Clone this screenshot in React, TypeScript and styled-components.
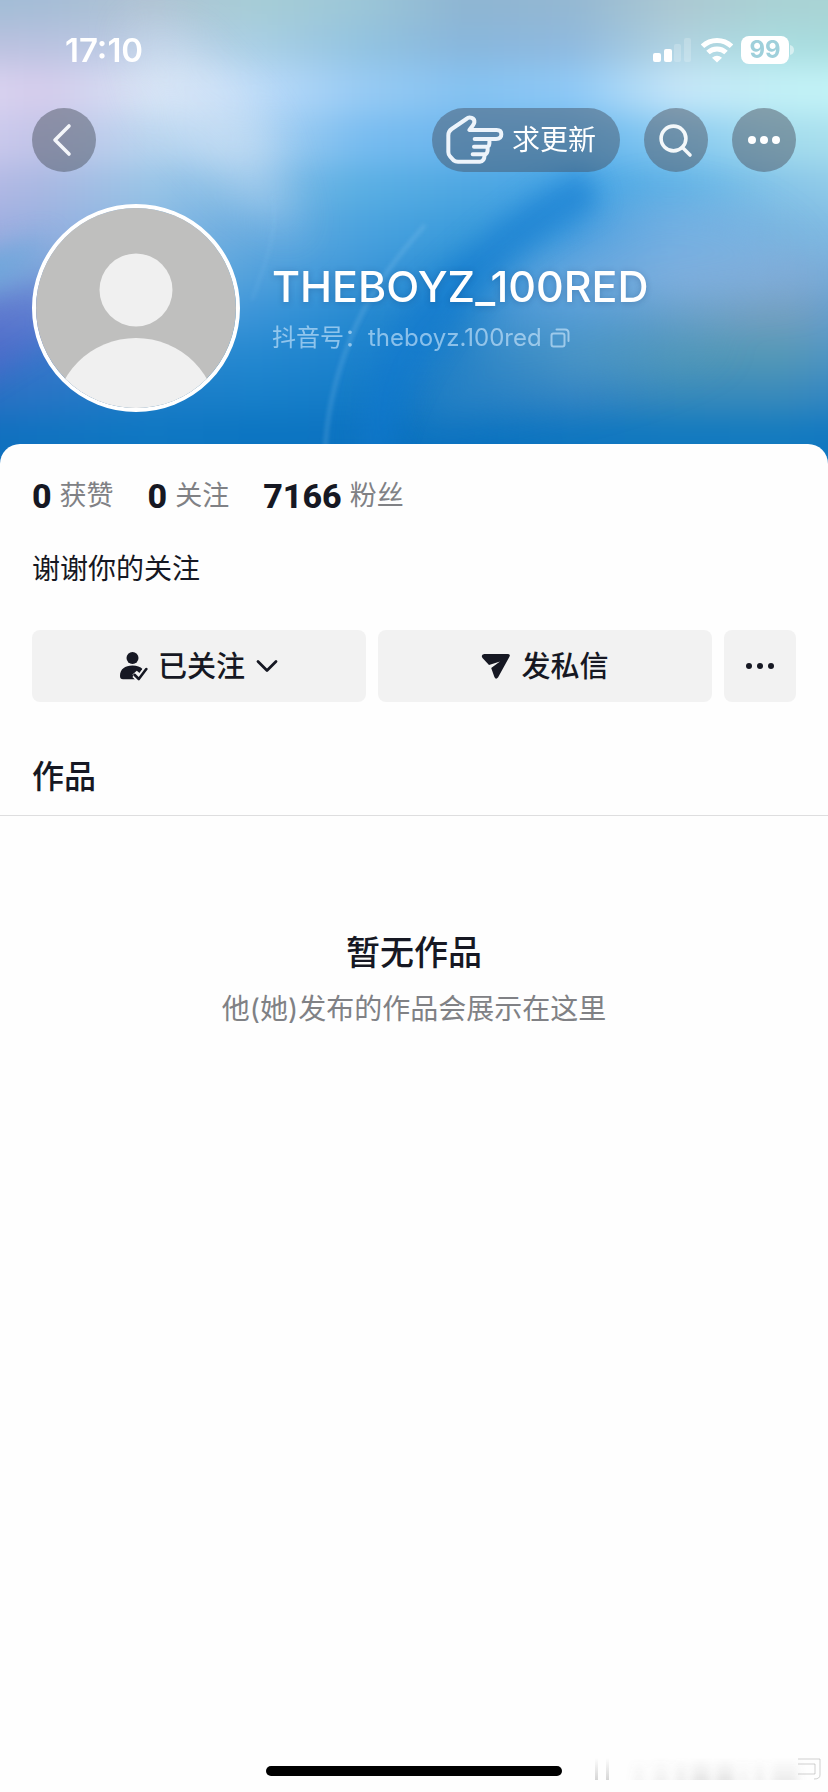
import React from "react";
import styled, { createGlobalStyle } from "styled-components";

const GlobalStyle = createGlobalStyle`
  *, *::before, *::after { box-sizing: border-box; }
  body {
    margin: 0;
    background: #fefefe;
    color: #161823;
    font-family: Inter, "Noto Sans CJK SC", sans-serif;
    -webkit-font-smoothing: antialiased;
  }
  button, h1, h2, p, dl, dt, dd { margin: 0; padding: 0; font: inherit; color: inherit; }
  button { border: 0; background: none; cursor: pointer; }
  svg { display: block; flex: none; }
`;

const Page = styled.div`
  position: relative;
  display: flex;
  flex-direction: column;
  min-height: 100vh;
`;

const Hero = styled.header`
  position: relative;
  isolation: isolate;
  overflow: hidden;
  padding: 0 32px 56px;
  color: #fff;
`;

const Wallpaper = styled.svg`
  position: absolute;
  inset: 0;
  z-index: -1;
  width: 100%;
  height: 100%;
`;

const StatusBar = styled.div`
  display: flex;
  align-items: center;
  justify-content: space-between;
  height: 108px;
  padding: 0 2px 8px 33px;
`;

const Clock = styled.time`
  font-size: 33px;
  line-height: 40px;
  font-weight: 600;
`;

const StatusIcons = styled.div`
  display: flex;
  align-items: center;
  gap: 8px;
`;

const Battery = styled.div`
  display: flex;
  align-items: center;
  gap: 1px;
`;

const BatteryLevel = styled.span`
  width: 48px;
  border-radius: 8px;
  background: #fff;
  color: #9fd0db;
  font-size: 24px;
  line-height: 28px;
  font-weight: 700;
  text-align: center;
`;

const NavBar = styled.nav`
  display: flex;
  align-items: center;
  gap: 24px;
`;

const RoundButton = styled.button<{ $pushNext?: boolean }>`
  display: grid;
  place-items: center;
  width: 64px;
  height: 64px;
  margin-right: ${(p) => (p.$pushNext ? "auto" : "0")};
  border-radius: 32px;
  background: rgba(78, 85, 100, 0.5);
`;

const PillButton = styled.button`
  display: flex;
  align-items: center;
  gap: 8px;
  height: 64px;
  padding: 0 24px 0 12px;
  border-radius: 32px;
  background: rgba(70, 85, 105, 0.5);
  font-size: 28px;
  line-height: 40px;
`;

const Identity = styled.div`
  display: flex;
  align-items: center;
  gap: 32px;
  margin-top: 32px;
`;

const Avatar = styled.div`
  flex: none;
  width: 208px;
  height: 208px;
  overflow: hidden;
  border: 4px solid #fff;
  border-radius: 50%;
`;

const Name = styled.h1`
  font-size: 43px;
  line-height: 52px;
  font-weight: 500;
  text-shadow: 0 1px 6px rgba(0, 40, 90, 0.25);
`;

const Account = styled.p`
  display: flex;
  align-items: center;
  gap: 8px;
  margin-top: 8px;
  color: rgba(214, 236, 255, 0.6);
  font-size: 24px;
  line-height: 36px;
`;

const Sheet = styled.main`
  position: relative;
  margin-top: -24px;
  border-radius: 20px 20px 0 0;
  background: #fefefe;
`;

const Stats = styled.dl`
  display: flex;
  gap: 34px;
  padding: 32px 32px 0;
`;

const Stat = styled.div`
  display: flex;
  flex-direction: row-reverse;
  align-items: center;
  gap: 8px;
  line-height: 40px;
`;

const StatLabel = styled.dt`
  color: #808185;
  font-size: 27px;
`;

const StatValue = styled.dd`
  font-family: Roboto, sans-serif;
  font-size: 34px;
  font-weight: 800;
`;

const Bio = styled.p`
  padding: 33px 32px 0;
  font-size: 28px;
  line-height: 40px;
`;

const Actions = styled.div`
  display: flex;
  gap: 12px;
  padding: 41px 32px 0;
`;

const ActionButton = styled.button<{ $square?: boolean }>`
  display: flex;
  align-items: center;
  justify-content: center;
  gap: 10px;
  flex: ${(p) => (p.$square ? "none" : "1 1 0")};
  width: ${(p) => (p.$square ? "72px" : "auto")};
  height: 72px;
  border-radius: 8px;
  background: #f2f2f2;
  font-size: 29px;
  line-height: 40px;
  font-weight: 500;
`;

const ActionLabel = styled.span`
  padding-top: 2px;
`;

const SectionTitle = styled.h2`
  padding: 51px 32px 14px;
  border-bottom: 1px solid #dededf;
  font-size: 32px;
  line-height: 48px;
  font-weight: 500;
`;

const Empty = styled.section`
  padding: 113px 32px 64px;
  text-align: center;
`;

const EmptyTitle = styled.h2`
  font-size: 34px;
  line-height: 48px;
  font-weight: 500;
`;

const EmptyText = styled.p`
  margin-top: 12px;
  color: #808185;
  font-size: 28px;
  line-height: 40px;
`;

const Footer = styled.footer`
  position: relative;
  display: flex;
  justify-content: center;
  margin-top: auto;
  padding: 24px 0 16px;
`;

const HomeIndicator = styled.div`
  width: 296px;
  height: 10px;
  border-radius: 5px;
  background: #000;
`;

const Watermark = styled.svg`
  position: absolute;
  right: 6px;
  bottom: 4px;
`;

type Band = { y: number; h: number; colors: string[] };

/* Each band runs left to right; a blur melts them into each other. */
const bands: Band[] = [
  { y: -60, h: 85, colors: ["#a0bcd6", "#a5bdd6", "#b0c3d3", "#a6cdd6", "#9cc6d7", "#8eb5d2", "#94b8d2", "#acc8d2", "#a9d2d4", "#a8d4d4"] },
  { y: 25, h: 40, colors: ["#bcc0de", "#b9c2e0", "#bacde4", "#a9cfe4", "#92c3e0", "#88b6dc", "#8fb9de", "#b0d2e0", "#a9dde0", "#a5dadb"] },
  { y: 65, h: 50, colors: ["#dcd8f3", "#d5ccec", "#d6e3f5", "#bcdbf9", "#98cbf4", "#85c2f1", "#8fc9f6", "#c6e6f8", "#c3f1f7", "#c4f5f8"] },
  { y: 115, h: 50, colors: ["#d2cef0", "#c2c4e8", "#b9d5ef", "#a8d0f1", "#78bcf0", "#6cb6ee", "#66b6ed", "#88caf2", "#a4dced", "#ace2ed"] },
  { y: 165, h: 45, colors: ["#bab8e6", "#a8b8e2", "#98c4e6", "#7cb8e5", "#5aafe3", "#4ea7e2", "#42a2e4", "#5eb2e6", "#86c4e8", "#98cfe9"] },
  { y: 210, h: 45, colors: ["#a4aae0", "#96b0e0", "#86b8e2", "#66aadf", "#4aa2de", "#3a9bdb", "#3898de", "#6aaee2", "#7ab6e0", "#84bde4"] },
  { y: 255, h: 40, colors: ["#7ba2da", "#7aa4da", "#6eaddd", "#52a1dc", "#3c96d8", "#258bd3", "#529fdc", "#7aaddc", "#7faad4", "#74acdc"] },
  { y: 295, h: 40, colors: ["#6078ce", "#5a86d0", "#4f9cd8", "#3a94d8", "#2589d0", "#1e82cc", "#4a99d8", "#6aa0c8", "#749fbe", "#5a9cd8"] },
  { y: 335, h: 40, colors: ["#466ac8", "#3a76ca", "#2c88cf", "#2488d0", "#1c82cd", "#1b7dc9", "#4794c8", "#5298b8", "#5598b6", "#4a92d0"] },
  { y: 375, h: 40, colors: ["#2e6cc2", "#2875c5", "#1d7dc8", "#1880ca", "#147bc7", "#1578c5", "#2f82c4", "#388abb", "#3a8abb", "#2f84c8"] },
  { y: 415, h: 115, colors: ["#106dbe", "#0f73c0", "#0e77c2", "#0b74c1", "#0c73c1", "#0871c0", "#0f76c0", "#1179bf", "#127abf", "#0f75c2"] },
];

function HeroWallpaper() {
  return (
    <Wallpaper viewBox="0 0 828 468" preserveAspectRatio="none" aria-hidden="true">
      <defs>
        {bands.map((b, i) => (
          <linearGradient key={i} id={`band${i}`}>
            {b.colors.map((c, j) => (
              <stop key={j} offset={j / (b.colors.length - 1)} stopColor={c} />
            ))}
          </linearGradient>
        ))}
        <filter id="melt" filterUnits="userSpaceOnUse" x="-80" y="-80" width="990" height="640" colorInterpolationFilters="sRGB">
          <feGaussianBlur stdDeviation="14 16" />
        </filter>
        <filter id="haze" filterUnits="userSpaceOnUse" x="-120" y="-100" width="1070" height="700" colorInterpolationFilters="sRGB">
          <feGaussianBlur stdDeviation="22" />
        </filter>
        <filter id="soft" filterUnits="userSpaceOnUse" x="-60" y="-60" width="950" height="600" colorInterpolationFilters="sRGB">
          <feGaussianBlur stdDeviation="12" />
        </filter>
        <filter id="fine" filterUnits="userSpaceOnUse" x="0" y="0" width="828" height="468" colorInterpolationFilters="sRGB">
          <feGaussianBlur stdDeviation="2" />
        </filter>
      </defs>
      <g filter="url(#melt)">
        {bands.map((b, i) => (
          <rect key={i} x="-60" y={b.y} width="948" height={b.h + 1} fill={`url(#band${i})`} />
        ))}
      </g>
      <g filter="url(#haze)">
        <path d="M130 20 L190 40 L265 120 L300 240 L230 190 L150 105Z" fill="#dfebf8" opacity="0.38" />
        <path d="M640 200 C590 225 520 270 470 330 C600 320 720 290 810 290 C800 230 720 190 640 200Z" fill="#82b2e0" opacity="0.4" />
        <path d="M480 330 C560 290 680 310 720 340 C660 380 560 400 420 430 C430 390 450 350 480 330Z" fill="#4c96c4" opacity="0.35" />
      </g>
      <g filter="url(#soft)">
        <path d="M585 170 C535 190 470 240 410 305 C375 345 360 400 362 470 H388 C395 405 425 350 470 300 C510 258 550 230 600 205Z" fill="#1079cd" opacity="0.55" />
        <path d="M-30 290 C10 280 35 262 50 235 L20 245 L-30 260Z" fill="#68a8dc" opacity="0.7" />
        <path d="M-30 325 C0 300 20 290 45 275 L50 340 L-30 390Z" fill="#6468ce" opacity="0.3" />
      </g>
      <g filter="url(#fine)" fill="none" stroke="#9ad2f5">
        <path d="M425 225 C392 262 366 298 350 340 C332 385 326 420 325 455" strokeWidth="3" opacity="0.3" />
        <path d="M273 195 C279 230 265 265 252 300" strokeWidth="3" opacity="0.15" />
      </g>
    </Wallpaper>
  );
}

function SignalIcon() {
  return (
    <svg width="40" height="28" viewBox="0 0 40 28" fill="#fff" role="img" aria-label="信号">
      <rect x="0" y="17" width="8" height="9" rx="2" />
      <rect x="11" y="13" width="8" height="13" rx="2" />
      <rect x="21" y="8" width="7" height="18" rx="2" opacity="0.2" />
      <rect x="31" y="2" width="7" height="24" rx="2" opacity="0.2" />
    </svg>
  );
}

function WifiIcon() {
  return (
    <svg width="32" height="28" viewBox="0 0 32 28" role="img" aria-label="Wi-Fi">
      <g fill="none" stroke="#fff" strokeWidth="5">
        <path d="M1.5 10.2 A21 21 0 0 1 30.5 10.2" />
        <path d="M7 16.5 A13 13 0 0 1 25 16.5" />
      </g>
      <path d="M16 26.5 L11 21.8 A8 8 0 0 1 21 21.8Z" fill="#fff" />
    </svg>
  );
}

function HandIcon() {
  return (
    <svg width="60" height="52" viewBox="0 0 180 156" fill="none" stroke="#edf4fb" strokeWidth="12" strokeLinejoin="round" strokeLinecap="round" aria-hidden="true">
      <path d="M122 122 Q121 143 108 143 H42 Q34 143 29 139 L18 127 Q13 122 13 114 V64 Q13 52 23 45 L67 15 C76 6 93 12 91 25 Q90 31 76 48 H158 Q172 48 172 61 Q172 75 156 75 H92" />
      <path d="M136 76 Q138 98 130 98 H90 M131 99 Q132 121 122 121 H86" />
    </svg>
  );
}

function Dots({ size, gap, radius }: { size: number; gap: number; radius: number }) {
  const c = size / 2;
  return (
    <svg width={size} height={size} viewBox={`0 0 ${size} ${size}`} fill="currentColor" aria-hidden="true">
      <circle cx={c - gap} cy={c} r={radius} />
      <circle cx={c} cy={c} r={radius} />
      <circle cx={c + gap} cy={c} r={radius} />
    </svg>
  );
}

const stats = [
  { value: "0", label: "获赞" },
  { value: "0", label: "关注" },
  { value: "7166", label: "粉丝" },
];

const smudges = [
  { x: 40, w: 10, o: 0.08 },
  { x: 60, w: 14, o: 0.1 },
  { x: 82, w: 10, o: 0.14 },
  { x: 98, w: 18, o: 0.18 },
  { x: 122, w: 18, o: 0.18 },
  { x: 146, w: 8, o: 0.1 },
  { x: 162, w: 7, o: 0.15 },
  { x: 178, w: 26, o: 0.13 },
];

export default function App() {
  return (
    <>
      <GlobalStyle />
      <Page>
        <Hero>
          <HeroWallpaper />
          <StatusBar>
            <Clock>17:10</Clock>
            <StatusIcons>
              <SignalIcon />
              <WifiIcon />
              <Battery>
                <BatteryLevel>99</BatteryLevel>
                <svg width="4" height="10" viewBox="0 0 4 10" aria-hidden="true">
                  <path d="M0 0 Q4 1 4 5 Q4 9 0 10Z" fill="#fff" opacity="0.5" />
                </svg>
              </Battery>
            </StatusIcons>
          </StatusBar>

          <NavBar>
            <RoundButton type="button" aria-label="返回" $pushNext>
              <svg width="36" height="36" viewBox="0 0 36 36" fill="none" stroke="#f4f6fa" strokeWidth="3.6" strokeLinecap="round" strokeLinejoin="round" aria-hidden="true">
                <path d="M23 4 L9 18 L23 32" />
              </svg>
            </RoundButton>
            <PillButton type="button">
              <HandIcon />
              求更新
            </PillButton>
            <RoundButton type="button" aria-label="搜索">
              <svg width="36" height="36" viewBox="0 0 36 36" fill="none" stroke="#f4f8fa" strokeWidth="3.6" strokeLinecap="round" aria-hidden="true">
                <circle cx="15.5" cy="16.5" r="12.4" />
                <path d="M24.5 25.5 L32 33" />
              </svg>
            </RoundButton>
            <RoundButton type="button" aria-label="更多">
              <Dots size={36} gap={12} radius={4} />
            </RoundButton>
          </NavBar>

          <Identity>
            <Avatar>
              <svg width="200" height="200" viewBox="0 0 200 200" role="img" aria-label="头像">
                <rect width="200" height="200" fill="#bfbfbe" />
                <circle cx="100" cy="82" r="36.5" fill="#f0f0f0" />
                <circle cx="100" cy="212" r="82" fill="#f0f0f0" />
              </svg>
            </Avatar>
            <div>
              <Name>THEBOYZ_100RED</Name>
              <Account>
                <span>抖音号：theboyz.100red</span>
                <svg width="20" height="20" viewBox="0 0 20 20" fill="none" stroke="currentColor" strokeWidth="2" strokeLinecap="round" aria-hidden="true">
                  <rect x="1.5" y="5.5" width="13" height="13" rx="2" />
                  <path d="M6.5 1.5 H15 Q18.5 1.5 18.5 5 V13" />
                </svg>
              </Account>
            </div>
          </Identity>
        </Hero>

        <Sheet>
          <Stats>
            {stats.map((s) => (
              <Stat key={s.label}>
                <StatLabel>{s.label}</StatLabel>
                <StatValue>{s.value}</StatValue>
              </Stat>
            ))}
          </Stats>
          <Bio>谢谢你的关注</Bio>
          <Actions>
            <ActionButton type="button">
              <svg width="29" height="30" viewBox="0 0 29 30" aria-hidden="true">
                <circle cx="13.5" cy="7" r="6" fill="#161823" />
                <path d="M1 25 C1 18 6 14.5 13.5 14.5 C18 14.5 21.5 15.7 23.5 18 L20.5 22 L17.8 19.8 L13.5 23.5 L16 28.3 H4 Q1 28.3 1 25Z" fill="#161823" />
                <path d="M15.5 23.8 L19.8 28 L27.3 18" fill="none" stroke="#f2f2f2" strokeWidth="6" />
                <path d="M15.5 23.8 L19.8 28 L27.3 18" fill="none" stroke="#161823" strokeWidth="2.6" strokeLinecap="round" strokeLinejoin="round" />
              </svg>
              <ActionLabel>已关注</ActionLabel>
              <svg width="24" height="24" viewBox="0 0 24 24" fill="none" stroke="#161823" strokeWidth="2.8" strokeLinecap="round" strokeLinejoin="round" aria-hidden="true">
                <path d="M3 7.5 L12 16.5 L21 7.5" />
              </svg>
            </ActionButton>
            <ActionButton type="button">
              <svg width="30" height="30" viewBox="0 0 30 30" aria-hidden="true">
                <path d="M3.2 3 H26.5 Q30 3 28.3 6 L17 26.5 Q14.8 29 13.4 26 L10.2 17 L19 10.6 L8 14 L1.5 7 Q-0.5 3.5 3.2 3Z" fill="#161823" />
              </svg>
              <ActionLabel>发私信</ActionLabel>
            </ActionButton>
            <ActionButton type="button" $square aria-label="更多操作">
              <Dots size={32} gap={11} radius={3} />
            </ActionButton>
          </Actions>
          <SectionTitle>作品</SectionTitle>
          <Empty>
            <EmptyTitle>暂无作品</EmptyTitle>
            <EmptyText>他(她)发布的作品会展示在这里</EmptyText>
          </Empty>
        </Sheet>

        <Footer>
          <HomeIndicator />
          <Watermark width="228" height="30" viewBox="0 0 228 30" aria-hidden="true">
            <defs>
              <linearGradient id="fade" x2="0" y2="1">
                <stop offset="0" stopColor="#777" stopOpacity="0" />
                <stop offset="1" stopColor="#777" />
              </linearGradient>
              <filter id="smudge" x="-10%" width="120%">
                <feGaussianBlur stdDeviation="4 0" />
              </filter>
            </defs>
            <g filter="url(#smudge)">
              {smudges.map((s) => (
                <rect key={s.x} x={s.x} y="0" width={s.w} height="22" fill="url(#fade)" opacity={s.o} />
              ))}
            </g>
            <rect x="1" y="0" width="3" height="22" fill="url(#fade)" opacity="0.3" />
            <rect x="12" y="0" width="3" height="22" fill="url(#fade)" opacity="0.3" />
            <path d="M204 1 H226 V17 Q226 21 220 21 M204 6 H221 V16 H204" fill="none" stroke="#999" strokeWidth="1" opacity="0.45" />
          </Watermark>
        </Footer>
      </Page>
    </>
  );
}
